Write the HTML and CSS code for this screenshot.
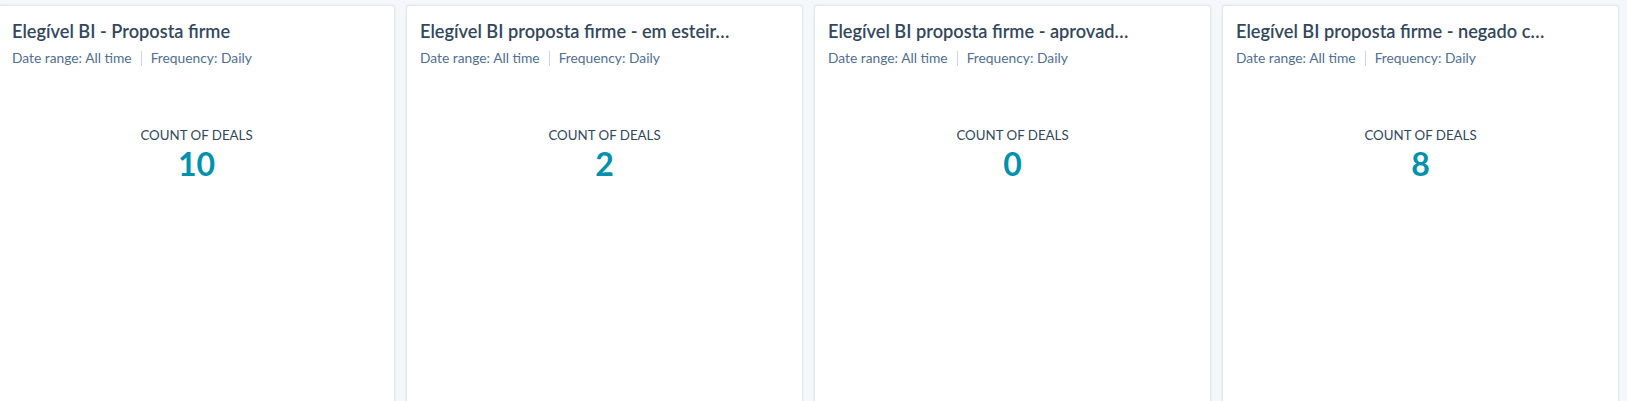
FILE: index.html
```html
<!DOCTYPE html>
<html lang="pt">
<head>
<meta charset="utf-8">
<title>Reports</title>
<link rel="stylesheet" href="styles.css">
</head>
<body>
<div class="grid">
  <section class="card">
    <header class="card-head">
      <h2 class="title">Elegível BI - Proposta firme</h2>
      <div class="meta"><span>Date range: All time</span><span class="sep"></span><span>Frequency: Daily</span></div>
    </header>
    <div class="kpi"><div class="kpi-label">COUNT OF DEALS</div><div class="kpi-value">10</div></div>
  </section>
  <section class="card">
    <header class="card-head">
      <h2 class="title">Elegível BI proposta firme - em esteir…</h2>
      <div class="meta"><span>Date range: All time</span><span class="sep"></span><span>Frequency: Daily</span></div>
    </header>
    <div class="kpi"><div class="kpi-label">COUNT OF DEALS</div><div class="kpi-value">2</div></div>
  </section>
  <section class="card">
    <header class="card-head">
      <h2 class="title">Elegível BI proposta firme - aprovad…</h2>
      <div class="meta"><span>Date range: All time</span><span class="sep"></span><span>Frequency: Daily</span></div>
    </header>
    <div class="kpi"><div class="kpi-label">COUNT OF DEALS</div><div class="kpi-value">0</div></div>
  </section>
  <section class="card">
    <header class="card-head">
      <h2 class="title">Elegível BI proposta firme - negado c…</h2>
      <div class="meta"><span>Date range: All time</span><span class="sep"></span><span>Frequency: Daily</span></div>
    </header>
    <div class="kpi"><div class="kpi-label">COUNT OF DEALS</div><div class="kpi-value">8</div></div>
  </section>
</div>
</body>
</html>
```

FILE: styles.css
```css
html, body {
  margin: 0;
  padding: 0;
  background: #f5f8fa;
  overflow: hidden;
}
body {
  font-family: Lato, "Open Sans", sans-serif;
  color: #33475b;
}
.grid {
  display: flex;
  gap: 11px;
  padding-top: 5px;
  margin-left: -2px;
}
.card {
  flex: 0 0 397px;
  height: 420px;
  box-sizing: border-box;
  background: #fff;
  border: 1px solid #e3e8ee;
  border-radius: 3px;
  box-shadow: 0 0 2px rgba(45, 62, 80, 0.12);
}
.card-head {
  padding: 13px 12px 0 13px;
}
.title {
  margin: 0;
  font-size: 18.2px;
  font-weight: 600;
  line-height: 24px;
  color: #33475b;
  white-space: nowrap;
  overflow: hidden;
  max-width: 340px;
}
.meta {
  display: flex;
  align-items: center;
  margin-top: 6px;
  font-size: 13.8px;
  line-height: 18px;
  color: #516f90;
}
.sep {
  width: 1px;
  height: 15px;
  background: #cbd6e2;
  margin: 0 9px;
}
.kpi {
  margin-top: 60px;
  text-align: center;
}
.kpi-label {
  font-size: 13.3px;
  line-height: 16px;
  color: #33475b;
}
.kpi-value {
  margin-top: 3px;
  font-size: 32px;
  font-weight: 700;
  line-height: 36px;
  color: #0091ae;
}
```
